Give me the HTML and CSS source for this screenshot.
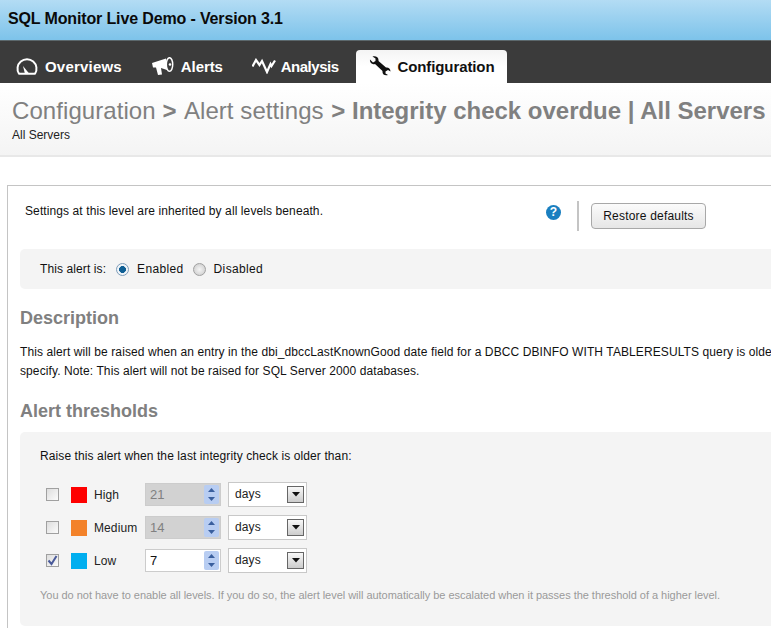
FILE: index.html
```html
<!DOCTYPE html>
<html lang="en">
<head>
<meta charset="utf-8">
<title>SQL Monitor Live Demo</title>
<link rel="stylesheet" href="styles.css">
</head>
<body>
<header class="topbar">SQL Monitor Live Demo - Version 3.1</header>
<nav class="nav">
  <a class="tab tab-overviews">
    <svg class="ico" width="22" height="17" viewBox="0 -1 22 17"><path d="M3 14.800 A9.500 9.500 0 1 1 19 14.800 Z" fill="none" stroke="#fff" stroke-width="2" stroke-linejoin="round"/><path d="M9 15 L7 7 L13.500 15 Z" fill="#fff"/></svg>
    Overviews
  </a>
  <a class="tab tab-alerts">
    <svg class="ico" width="22" height="19" viewBox="0 0 22 19"><path d="M0 6 L14 1.500 L15 13 L9 11 L10 17.500 L6 18 L4 10.500 L1 10.500 Z" fill="#fff"/><ellipse cx="17.500" cy="7.500" rx="3.200" ry="6.800" fill="none" stroke="#fff" stroke-width="1.500"/><circle cx="18" cy="7.500" r="1.300" fill="#fff"/></svg>
    Alerts
  </a>
  <a class="tab tab-analysis">
    <svg class="ico" width="24" height="16" viewBox="0 0 24 16"><path d="M0.500 8.500 L4 2 L7.500 7 L10 3 L15 14 L18.500 6 L19.500 8 L23 2.500" fill="none" stroke="#fff" stroke-width="2.200"/></svg>
    Analysis
  </a>
  <a class="tab tab-active">
    <svg class="ico" width="22" height="20" viewBox="0 0 22 20"><path d="M1 3.500 L4 6.500 L6.500 5 L6.500 2.500 L3.500 0.500 C7 -0.500 10 1.500 9.500 5 L17 11.500 C19 11 21.500 12.500 21.500 15.500 L19 14 L16.500 15.500 L16.500 17.500 L19 19 C16 20 13 18.500 13.500 15 L6 8 C3 9 0.500 7 1 3.500 Z" fill="#111"/></svg>
    Configuration
  </a>
</nav>
<section class="crumbs">
  <h1 class="crumb-title">Configuration <b class="sep">&gt;</b> Alert settings <b class="crumb-strong">&gt; Integrity check overdue | All Servers</b></h1>
  <p class="crumb-sub">All Servers</p>
</section>
<main class="panel">
  <div class="info">
    <span class="info-text">Settings at this level are inherited by all levels beneath.</span>
    <span class="help">?</span>
    <span class="divider"></span>
    <button class="btn">Restore defaults</button>
  </div>
  <div class="status">
    <span class="status-label">This alert is:</span>
    <span class="radio radio-on"></span><span class="status-opt">Enabled</span>
    <span class="radio"></span><span class="status-opt">Disabled</span>
  </div>
  <h2 class="heading">Description</h2>
  <p class="desc">This alert will be raised when an entry in the dbi_dbccLastKnownGood date field for a DBCC DBINFO WITH TABLERESULTS query is older than the time you<br>specify. Note: This alert will not be raised for SQL Server 2000 databases.</p>
  <h2 class="heading heading-th">Alert thresholds</h2>
  <div class="thresholds">
    <p class="th-intro">Raise this alert when the last integrity check is older than:</p>
    <div class="th-grid">
      <span class="check"></span><span class="swatch sw-high"></span><span class="lvl">High</span>
      <span class="spin spin-off">21<span class="arrows"><svg width="13" height="19" viewBox="0 0 13 19"><path d="M3 7 L6.500 3 L10 7 Z M3 12 L6.500 16 L10 12 Z" fill="#3a5f9e"/></svg></span></span>
      <span class="sel">days<span class="sel-btn"><svg width="8" height="5" viewBox="0 0 8 5"><path d="M0 0 H8 L4 4.500 Z" fill="#111"/></svg></span></span>

      <span class="check"></span><span class="swatch sw-med"></span><span class="lvl">Medium</span>
      <span class="spin spin-off">14<span class="arrows"><svg width="13" height="19" viewBox="0 0 13 19"><path d="M3 7 L6.500 3 L10 7 Z M3 12 L6.500 16 L10 12 Z" fill="#3a5f9e"/></svg></span></span>
      <span class="sel">days<span class="sel-btn"><svg width="8" height="5" viewBox="0 0 8 5"><path d="M0 0 H8 L4 4.500 Z" fill="#111"/></svg></span></span>

      <span class="check"><svg width="11" height="11" viewBox="0 0 11 11"><path d="M1.500 5.500 L4.500 9 L9.500 1" fill="none" stroke="#4a5a9a" stroke-width="2"/></svg></span><span class="swatch sw-low"></span><span class="lvl">Low</span>
      <span class="spin">7<span class="arrows"><svg width="13" height="19" viewBox="0 0 13 19"><path d="M3 7 L6.500 3 L10 7 Z M3 12 L6.500 16 L10 12 Z" fill="#3a5f9e"/></svg></span></span>
      <span class="sel">days<span class="sel-btn"><svg width="8" height="5" viewBox="0 0 8 5"><path d="M0 0 H8 L4 4.500 Z" fill="#111"/></svg></span></span>
    </div>
    <p class="th-note">You do not have to enable all levels. If you do so, the alert level will automatically be escalated when it passes the threshold of a higher level.</p>
  </div>
</main>
</body>
</html>
```
FILE: styles.css
```css
* { box-sizing: border-box; }
html, body { margin: 0; padding: 0; height: 628px; overflow: hidden; background: #fff; }
body { font-family: "Liberation Sans", Arial, sans-serif; font-size: 12px; letter-spacing: 0.1px; color: #111; width: 771px; }

.topbar { height: 40px; padding: 10px 0 0 8px; font-size: 16px; line-height: 18px; font-weight: bold; letter-spacing: -0.14px; color: #0a0a0a; background: linear-gradient(#b3dcf4, #7dc3ea); }

.nav { height: 43px; background: #3b3b3b; border-top: 1px solid #5c686c; display: flex; align-items: flex-end; padding-left: 16px; }
.tab { height: 33px; display: flex; align-items: center; gap: 7px; font-size: 15px; font-weight: bold; letter-spacing: -0.1px; color: #fff; padding-bottom: 1px; }
.ico { flex: none; display: block; }
.tab-overviews { letter-spacing: 0.2px; }
.tab-alerts { margin-left: 30px; }
.tab-analysis { margin-left: 29px; gap: 5px; letter-spacing: -0.5px; }
.tab-active { margin-left: 18px; width: 151px; padding: 0 0 1px 13px; gap: 6px; color: #111; letter-spacing: -0.1px; border-radius: 4px 4px 0 0; background: linear-gradient(#f4f4f4, #fff 50%); }

.crumbs { height: 74px; padding: 14px 0 0 12px; border-bottom: 2px solid #e8e8e8; background: linear-gradient(#fff, #f4f4f4); }
.crumb-title { margin: 0; font-size: 24px; line-height: 28px; font-weight: normal; letter-spacing: 0.07px; color: #808080; white-space: nowrap; }
.sep { margin-right: 2px; }
.crumb-strong { margin-left: 1px; letter-spacing: -0.015px; }
.crumb-sub { margin: 3px 0 0; font-size: 12px; line-height: 14px; letter-spacing: 0; color: #222; }

.panel { margin: 28px 0 0 7px; width: 764px; height: 443px; overflow: hidden; border: 1px solid #c4c4c4; border-right: 0; border-bottom: 0; padding: 0 0 0 12px; }

.info { height: 63px; display: flex; align-items: center; }
.info-text { margin-left: 5px; width: 521px; margin-top: -14px; }
.help { width: 15px; height: 15px; border-radius: 50%; background: #1a7fc0; color: #fff; font-size: 12px; font-weight: bold; line-height: 15px; text-align: center; margin-top: -11px; }
.divider { width: 2px; height: 30px; background: #c4c4c4; margin-left: 16px; margin-top: -3px; }
.btn { width: 115px; height: 26px; margin-left: 12px; margin-top: -3px; padding: 0; font: 12px "Liberation Sans", Arial, sans-serif; letter-spacing: 0.2px; color: #111; border: 1px solid #a8a8a8; border-radius: 4px; background: linear-gradient(#fbfbfb, #e6e6e6); }

.status { height: 40px; background: #f4f4f4; border-radius: 5px 0 0 5px; display: flex; align-items: center; padding-left: 20px; }
.status-label { margin-right: 10px; }
.status-opt { margin: 0 9px 0 8px; letter-spacing: 0.35px; }
.radio { width: 13px; height: 13px; border-radius: 50%; border: 1px solid #a0a0a0; background: radial-gradient(#f4f4f4, #c8c8c8); }
.radio-on { background: radial-gradient(circle, #0f5f94 0 3.200px, #f0f4f8 3.700px); border-color: #7f9db9; }

.heading { margin: 19px 0 0; font-size: 18px; line-height: 20px; font-weight: bold; letter-spacing: 0; color: #808080; }
.heading-th { margin-top: 20px; }
.desc { margin: 15px 0 0; line-height: 19px; white-space: nowrap; color: #111; }

.thresholds { margin-top: 11px; height: 194px; background: #f4f4f4; border-radius: 5px 0 0 5px; padding: 17px 0 0 20px; }
.th-intro { margin: 0; line-height: 14px; }
.th-grid { display: grid; grid-template-columns: 25px 23px 51px 83px 79px; row-gap: 8px; margin: 19px 0 0 6px; align-items: center; }
.check { width: 13px; height: 13px; border: 1px solid #a0a0a0; background: linear-gradient(135deg, #ddd, #fbfbfb); display: flex; align-items: center; justify-content: center; margin-top: -1px; }
.swatch { width: 16px; height: 16px; }
.sw-high { background: #fe0000; }
.sw-med { background: #f3822a; }
.sw-low { background: #00aeef; }
.lvl { color: #222; white-space: nowrap; }
.spin { position: relative; width: 76px; height: 23px; padding-left: 4px; font-size: 13px; line-height: 21px; border: 1px solid #ccc; background: #fff; color: #111; }
.spin-off { background: #d2d2d2; color: #808080; }
.arrows { position: absolute; right: 1px; top: 1px; width: 15px; height: 19px; background: #b8cdf2; border-radius: 2px; display: flex; align-items: center; justify-content: center; }
.sel { width: 79px; height: 25px; border: 1px solid #c8c8c8; background: #fff; padding-left: 6px; line-height: 23px; font-size: 12px; color: #222; display: flex; justify-content: space-between; align-items: center; }
.sel-btn { width: 17px; height: 17px; margin-right: 2px; border: 1px solid #666; background: linear-gradient(#f8f8f8, #ccc); display: flex; align-items: center; justify-content: center; }
.th-note { margin: 15px 0 0; font-size: 11px; line-height: 14px; letter-spacing: -0.03px; color: #9a9a9a; white-space: nowrap; }
```
